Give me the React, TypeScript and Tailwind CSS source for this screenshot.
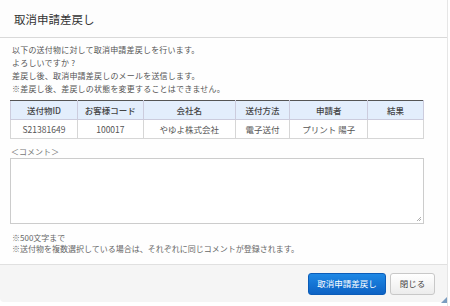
import React from "react";

const font = { fontFamily: '"Noto Sans CJK JP", "Noto Sans", sans-serif' };

export default function App() {
  const headers = ["送付物ID", "お客様コード", "会社名", "送付方法", "申請者", "結果"];
  const row = ["S21381649", "100017", "やゆよ株式会社", "電子送付", "プリント 陽子", ""];
  const widths = ["w-[67px]", "w-[66px]", "w-[92px]", "w-[55px]", "w-[78px]", "w-[56px]"];
  return (
    <div className="w-[450px] h-[306px] bg-white relative overflow-hidden" style={font}>
      <div className="w-[448px] h-[306px] border-r border-[#e6e6e6] flex flex-col">
        <div className="h-[38px] border-b border-[#d9d9d9] flex items-center pl-[14px] pt-[3px] bg-[#fdfdfd]">
          <span className="text-[11.5px] text-[#333] leading-none">取消申請差戻し</span>
        </div>
        <div className="px-[10px] pt-[5px] flex-1 flex flex-col bg-[#fefefe]">
          <div className="text-[8px] tracking-[0.2px] text-[#555] leading-[13px] pl-[2px]">
            <div>以下の送付物に対して取消申請差戻しを行います。</div>
            <div>よろしいですか ?</div>
            <div>差戻し後、取消申請差戻しのメールを送信します。</div>
            <div>※差戻し後、差戻しの状態を変更することはできません。</div>
          </div>
          <table className="mt-[5px] w-[414px] border-collapse text-[8.5px] text-[#444] border-t border-t-[#555]">
            <thead>
              <tr className="bg-[#e3eefc] h-[19px]">
                {headers.map((h, i) => (
                  <th key={h} className={`${widths[i]} border border-[#ccd] border-t-[#555] font-medium text-center leading-none p-0 text-[#444]`}>
                    {h}
                  </th>
                ))}
              </tr>
            </thead>
            <tbody>
              <tr className="bg-white h-[19px]">
                {row.map((c, i) => (
                  <td key={i} className="border border-[#d6d6d6] text-center leading-none p-0 text-[#555]">
                    {c}
                  </td>
                ))}
              </tr>
            </tbody>
          </table>
          <div className="mt-[9px] text-[8px] text-[#777] leading-none pl-[1px]">＜コメント＞</div>
          <div className="mt-[2px] w-[414px] h-[66px] border border-[#ccc] bg-white relative">
            <svg className="absolute right-[1px] bottom-[1px]" width="6" height="6" viewBox="0 0 6 6">
              <path d="M5 1L1 5M5 3L3 5" stroke="#999" strokeWidth="0.8" />
            </svg>
          </div>
          <div className="mt-[8px] text-[8px] text-[#666] leading-[11px] pl-[2px]">
            <div>※500文字まで</div>
            <div>※送付物を複数選択している場合は、それぞれに同じコメントが登録されます。</div>
          </div>
        </div>
        <div className="h-[38px] mb-[4px] border-t border-[#e0e0e0] bg-[#f5f5f5] rounded-bl-[4px] flex items-center justify-end pr-[12px] gap-[4px]">
          <button className="h-[22px] w-[78px] rounded-[3px] bg-gradient-to-b from-[#1e88e5] to-[#0d62c4] border border-[#0b5cb8] text-white text-[8.5px] leading-none">
            取消申請差戻し
          </button>
          <button className="h-[22px] w-[45px] rounded-[3px] bg-gradient-to-b from-white to-[#ececec] border border-[#c8c8c8] text-[#444] text-[8.5px] leading-none">
            閉じる
          </button>
        </div>
      </div>
      <svg className="absolute right-[3px] bottom-[3px]" width="6" height="6" viewBox="0 0 6 6">
        <path d="M6 0L0 6H6Z" fill="#7a9cc0" />
      </svg>
    </div>
  );
}
